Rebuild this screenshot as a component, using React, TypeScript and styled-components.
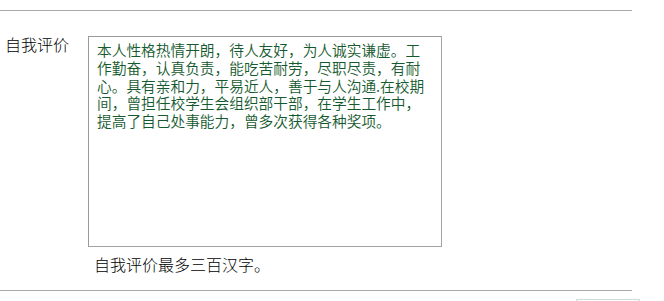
import React from "react";
import styled, { createGlobalStyle } from "styled-components";

const GlobalStyle = createGlobalStyle`
  html, body {
    margin: 0;
    padding: 0;
    background: #ffffff;
    font-family: "Noto Sans CJK SC", "Noto Sans", sans-serif;
  }
`;

const Page = styled.div`
  width: 664px;
  height: 301px;
  padding-top: 10px;
  box-sizing: border-box;
  overflow: hidden;
`;

const Section = styled.section`
  width: 632px;
  border-top: 1px solid #a9a9a9;
  border-bottom: 1px solid #a9a9a9;
  padding: 25px 0 16px;
  box-sizing: border-box;
`;

const FieldRow = styled.div`
  display: grid;
  grid-template-columns: 88px 1fr;
  align-items: start;
`;

const Label = styled.label`
  padding-left: 5px;
  font-size: 16px;
  font-weight: 300;
  line-height: 16px;
  color: #000;
`;

const FieldBody = styled.div`
  display: flex;
  flex-direction: column;
`;

const TextBox = styled.textarea`
  width: 354px;
  height: 211px;
  box-sizing: border-box;
  margin: 0;
  padding: 4px 8px;
  border: 1px solid #a3a3a3;
  border-top-color: #9a9a9a;
  border-left-color: #9a9a9a;
  border-radius: 0;
  resize: none;
  outline: none;
  background: #fff;
  font-family: "Noto Sans CJK SC", "Noto Sans", sans-serif;
  font-size: 14.7px;
  font-weight: 350;
  line-height: 17.8px;
  color: #155a2e;
  overflow: hidden;
`;

const Hint = styled.div`
  margin-top: 7px;
  padding-left: 6px;
  font-size: 16px;
  font-weight: 300;
  line-height: 20px;
  color: #000;
`;

const ActionRow = styled.div`
  width: 640px;
  display: flex;
  justify-content: flex-end;
  padding-top: 8px;
`;

const GhostButton = styled.button`
  width: 64px;
  height: 24px;
  border: 1px solid #d3dcdc;
  background: #fbfcfc;
  padding: 0;
`;

const text =
  "本人性格热情开朗，待人友好，为人诚实谦虚。工作勤奋，认真负责，能吃苦耐劳，尽职尽责，有耐心。具有亲和力，平易近人，善于与人沟通.在校期间，曾担任校学生会组织部干部，在学生工作中，提高了自己处事能力，曾多次获得各种奖项。";

export default function App() {
  return (
    <Page>
      <GlobalStyle />
      <Section>
        <FieldRow>
          <Label htmlFor="self-eval">自我评价</Label>
          <FieldBody>
            <TextBox id="self-eval" defaultValue={text} spellCheck={false} />
            <Hint>自我评价最多三百汉字。</Hint>
          </FieldBody>
        </FieldRow>
      </Section>
      <ActionRow>
        <GhostButton aria-label="提交" />
      </ActionRow>
    </Page>
  );
}
